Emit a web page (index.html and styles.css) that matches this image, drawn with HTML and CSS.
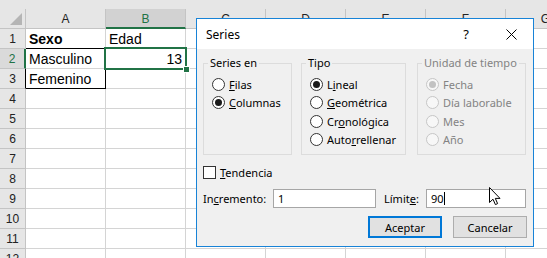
FILE: index.html
```html
<!DOCTYPE html>
<html lang="es">
  <head>
    <meta charset="UTF-8" />
    <title>Series</title>
    <link rel="stylesheet" href="styles.css">
  </head>
  <body>
    <div class="sheet">
      <div class="strip"></div>
      <div class="row head">
        <div class="cell num corner"><span class="tri"></span></div>
        <div class="cell">A</div>
        <div class="cell sel">B</div>
        <div class="cell">C</div>
        <div class="cell">D</div>
        <div class="cell">E</div>
        <div class="cell">F</div>
        <div class="cell">G</div>
      </div>
      <div class="row">
        <div class="cell num">1</div>
        <div class="cell bold under">Sexo</div>
        <div class="cell">Edad</div>
        <div class="cell"></div><div class="cell"></div><div class="cell"></div><div class="cell"></div><div class="cell"></div>
      </div>
      <div class="row">
        <div class="cell num sel">2</div>
        <div class="cell side">Masculino</div>
        <div class="cell active right">13</div>
        <div class="cell"></div><div class="cell"></div><div class="cell"></div><div class="cell"></div><div class="cell"></div>
      </div>
      <div class="row">
        <div class="cell num edge">3</div>
        <div class="cell side under">Femenino</div>
        <div class="cell"></div>
        <div class="cell"></div><div class="cell"></div><div class="cell"></div><div class="cell"></div><div class="cell"></div>
      </div>
      <div class="row"><div class="cell num">4</div><div class="cell"></div><div class="cell"></div><div class="cell"></div><div class="cell"></div><div class="cell"></div><div class="cell"></div><div class="cell"></div></div>
      <div class="row"><div class="cell num">5</div><div class="cell"></div><div class="cell"></div><div class="cell"></div><div class="cell"></div><div class="cell"></div><div class="cell"></div><div class="cell"></div></div>
      <div class="row"><div class="cell num">6</div><div class="cell"></div><div class="cell"></div><div class="cell"></div><div class="cell"></div><div class="cell"></div><div class="cell"></div><div class="cell"></div></div>
      <div class="row"><div class="cell num">7</div><div class="cell"></div><div class="cell"></div><div class="cell"></div><div class="cell"></div><div class="cell"></div><div class="cell"></div><div class="cell"></div></div>
      <div class="row"><div class="cell num">8</div><div class="cell"></div><div class="cell"></div><div class="cell"></div><div class="cell"></div><div class="cell"></div><div class="cell"></div><div class="cell"></div></div>
      <div class="row"><div class="cell num">9</div><div class="cell"></div><div class="cell"></div><div class="cell"></div><div class="cell"></div><div class="cell"></div><div class="cell"></div><div class="cell"></div></div>
      <div class="row"><div class="cell num">10</div><div class="cell"></div><div class="cell"></div><div class="cell"></div><div class="cell"></div><div class="cell"></div><div class="cell"></div><div class="cell"></div></div>
      <div class="row"><div class="cell num">11</div><div class="cell"></div><div class="cell"></div><div class="cell"></div><div class="cell"></div><div class="cell"></div><div class="cell"></div><div class="cell"></div></div>
      <div class="row"><div class="cell num">12</div><div class="cell"></div><div class="cell"></div><div class="cell"></div><div class="cell"></div><div class="cell"></div><div class="cell"></div><div class="cell"></div></div>
    </div>

    <div class="dialog">
      <div class="titlebar">
        <span class="title">Series</span>
        <span class="help">?</span>
        <svg class="close" width="11" height="11" viewBox="0 0 11 11">
          <path d="M0.5 0.5 L10.5 10.5 M10.5 0.5 L0.5 10.5" stroke="#000" stroke-width="1" fill="none" />
        </svg>
      </div>
      <div class="body">
        <div class="groups">
          <fieldset class="group g1">
            <legend>Series en</legend>
            <div class="opt"><span class="radio"></span><span><u>F</u>ilas</span></div>
            <div class="opt"><span class="radio on"></span><span><u>C</u>olumnas</span></div>
          </fieldset>
          <fieldset class="group g2">
            <legend>Tipo</legend>
            <div class="opt"><span class="radio on"></span><span>L<u>i</u>neal</span></div>
            <div class="opt"><span class="radio"></span><span><u>G</u>eométrica</span></div>
            <div class="opt"><span class="radio"></span><span>Cr<u>o</u>nológica</span></div>
            <div class="opt"><span class="radio"></span><span>Auto<u>r</u>rellenar</span></div>
          </fieldset>
          <fieldset class="group g3 disabled">
            <legend>Unidad de tiempo</legend>
            <div class="opt"><span class="radio on"></span><span>Fecha</span></div>
            <div class="opt"><span class="radio"></span><span>Día laborable</span></div>
            <div class="opt"><span class="radio"></span><span>Mes</span></div>
            <div class="opt"><span class="radio"></span><span>Año</span></div>
          </fieldset>
        </div>

        <div class="check"><span class="box"></span><span><u>T</u>endencia</span></div>

        <div class="fields">
          <span class="label inc-label">In<u>c</u>remento:</span>
          <span class="input inc">1</span>
          <span class="label lim-label">Límit<u>e</u>:</span>
          <span class="input lim">90<span class="caret"></span></span>
        </div>

        <div class="buttons">
          <button class="btn default">Aceptar</button>
          <button class="btn">Cancelar</button>
        </div>
      </div>
    </div>

    <svg class="pointer" width="13" height="20" viewBox="0 0 13 20">
      <path d="M0.5 0.5 L0.5 15.5 L4 12.2 L6.4 17.6 L8.6 16.6 L6.3 11.4 L11 11.4 Z" fill="#fff" stroke="#000" stroke-width="1" stroke-linejoin="miter" />
    </svg>
  </body>
</html>
```

FILE: styles.css
```css
body {
  margin: 0;
  width: 547px;
  height: 258px;
  overflow: hidden;
  position: relative;
  background: #fff;
  font-family: "Liberation Sans", Arial, sans-serif;
  color: #000;
}
.strip {
  height: 9px;
  background: #e6e6e6;
}
.row {
  display: flex;
  height: 20px;
}
.cell {
  flex: none;
  width: 80px;
  height: 20px;
  box-sizing: border-box;
  border-right: 1px solid #d4d4d4;
  border-bottom: 1px solid #d4d4d4;
  padding: 2px 3px 0;
  font-size: 14px;
  line-height: 17px;
  white-space: nowrap;
  position: relative;
}
.head .cell {
  background: #e6e6e6;
  border-color: #c4c4c4;
  text-align: center;
  font-size: 12px;
  line-height: 18px;
  padding: 1px 0 0;
  color: #222;
}
.head .cell.sel {
  background: #d2d2d2;
  color: #217346;
  border-bottom: 2px solid #217346;
}
.num {
  width: 26px;
  background: #e6e6e6;
  border-color: #c4c4c4;
  text-align: center;
  font-size: 12px;
  padding: 2px 0 0;
  color: #222;
}
.num.sel {
  background: #dadada;
  color: #217346;
  border-right: 2px solid #217346;
}
.num.edge {
  border-right-color: #000;
}
.corner .tri {
  position: absolute;
  left: 10px;
  top: 4px;
  width: 0;
  height: 0;
  border-left: 12px solid transparent;
  border-bottom: 12px solid #b5b5b5;
}
.bold {
  font-weight: bold;
}
.right {
  text-align: right;
}
.under {
  border-bottom-color: #000;
}
.side {
  border-right-color: #000;
}
.active {
  z-index: 2;
}
.active::after {
  content: "";
  position: absolute;
  left: -2px;
  top: -2px;
  right: -2px;
  bottom: -2px;
  border: 2px solid #217346;
}
.active::before {
  content: "";
  position: absolute;
  right: -5px;
  bottom: -5px;
  width: 5px;
  height: 5px;
  background: #217346;
  border: 1px solid #fff;
  z-index: 1;
}

/* dialog */
.dialog {
  position: absolute;
  left: 196px;
  top: 18px;
  width: 338px;
  height: 229px;
  box-sizing: border-box;
  border: 1px solid #1883d7;
  background: #f0f0f0;
  font-family: "Noto Sans", sans-serif;
  font-size: 11px;
  z-index: 5;
}
.titlebar {
  height: 30px;
  background: #fff;
  display: flex;
  align-items: center;
  padding-left: 9px;
  font-size: 12px;
}
.title {
  flex: 1;
}
.help {
  width: 8px;
  text-align: center;
  margin-right: 36px;
  font-size: 13px;
}
.close {
  margin-right: 16px;
}
.body {
  padding: 6px 6px 0;
}
.groups {
  display: flex;
  height: 100px;
}
.group {
  margin: 0;
  padding: 4px 0 0 4px;
  border: 1px solid #dcdcdc;
  box-sizing: border-box;
  height: 100px;
  min-width: 0;
}
.group legend {
  padding: 0 2px;
  line-height: 16px;
}
.g1 {
  width: 89px;
}
.g2 {
  width: 105px;
  margin-left: 9px;
}
.g3 {
  width: 109px;
  margin-left: 11px;
}
.disabled {
  color: #838383;
}
.opt {
  display: flex;
  align-items: center;
  height: 18.5px;
  padding-left: 4px;
  white-space: nowrap;
}
.radio {
  flex: none;
  width: 13px;
  height: 13px;
  box-sizing: border-box;
  border: 1px solid #333;
  border-radius: 50%;
  background: #fff;
  margin-right: 4px;
  position: relative;
}
.radio.on::after {
  content: "";
  position: absolute;
  left: 2px;
  top: 2px;
  width: 7px;
  height: 7px;
  border-radius: 50%;
  background: #1a1a1a;
}
.disabled .radio {
  border-color: #c6c6c6;
  background: #f7f7f7;
}
.disabled .radio.on::after {
  background: #c2c2c2;
}
.check {
  display: flex;
  align-items: center;
  height: 18px;
  margin-top: 8px;
}
.box {
  width: 13px;
  height: 13px;
  box-sizing: border-box;
  border: 1px solid #333;
  background: #fff;
  margin-right: 4px;
}
.fields {
  display: flex;
  align-items: center;
  height: 19px;
  margin-top: 8px;
}
.inc-label {
  width: 70px;
}
.lim-label {
  width: 42px;
  margin-left: 8px;
}
.input {
  height: 19px;
  box-sizing: border-box;
  border: 1px solid #a6a6a6;
  background: #fff;
  padding-left: 4px;
  line-height: 17px;
  display: flex;
  align-items: center;
}
.inc {
  width: 103px;
}
.lim {
  width: 100px;
}
.caret {
  display: inline-block;
  width: 1px;
  height: 13px;
  background: #000;
}
.buttons {
  display: flex;
  justify-content: flex-end;
  gap: 11px;
  margin-top: 8px;
}
.btn {
  width: 74px;
  height: 22px;
  box-sizing: border-box;
  border: 1px solid #adadad;
  background: #e1e1e1;
  font-family: inherit;
  font-size: 11px;
  color: #000;
  padding: 0;
}
.btn.default {
  border: 2px solid #0078d7;
}
.pointer {
  position: absolute;
  left: 489px;
  top: 187px;
  z-index: 10;
}
```
